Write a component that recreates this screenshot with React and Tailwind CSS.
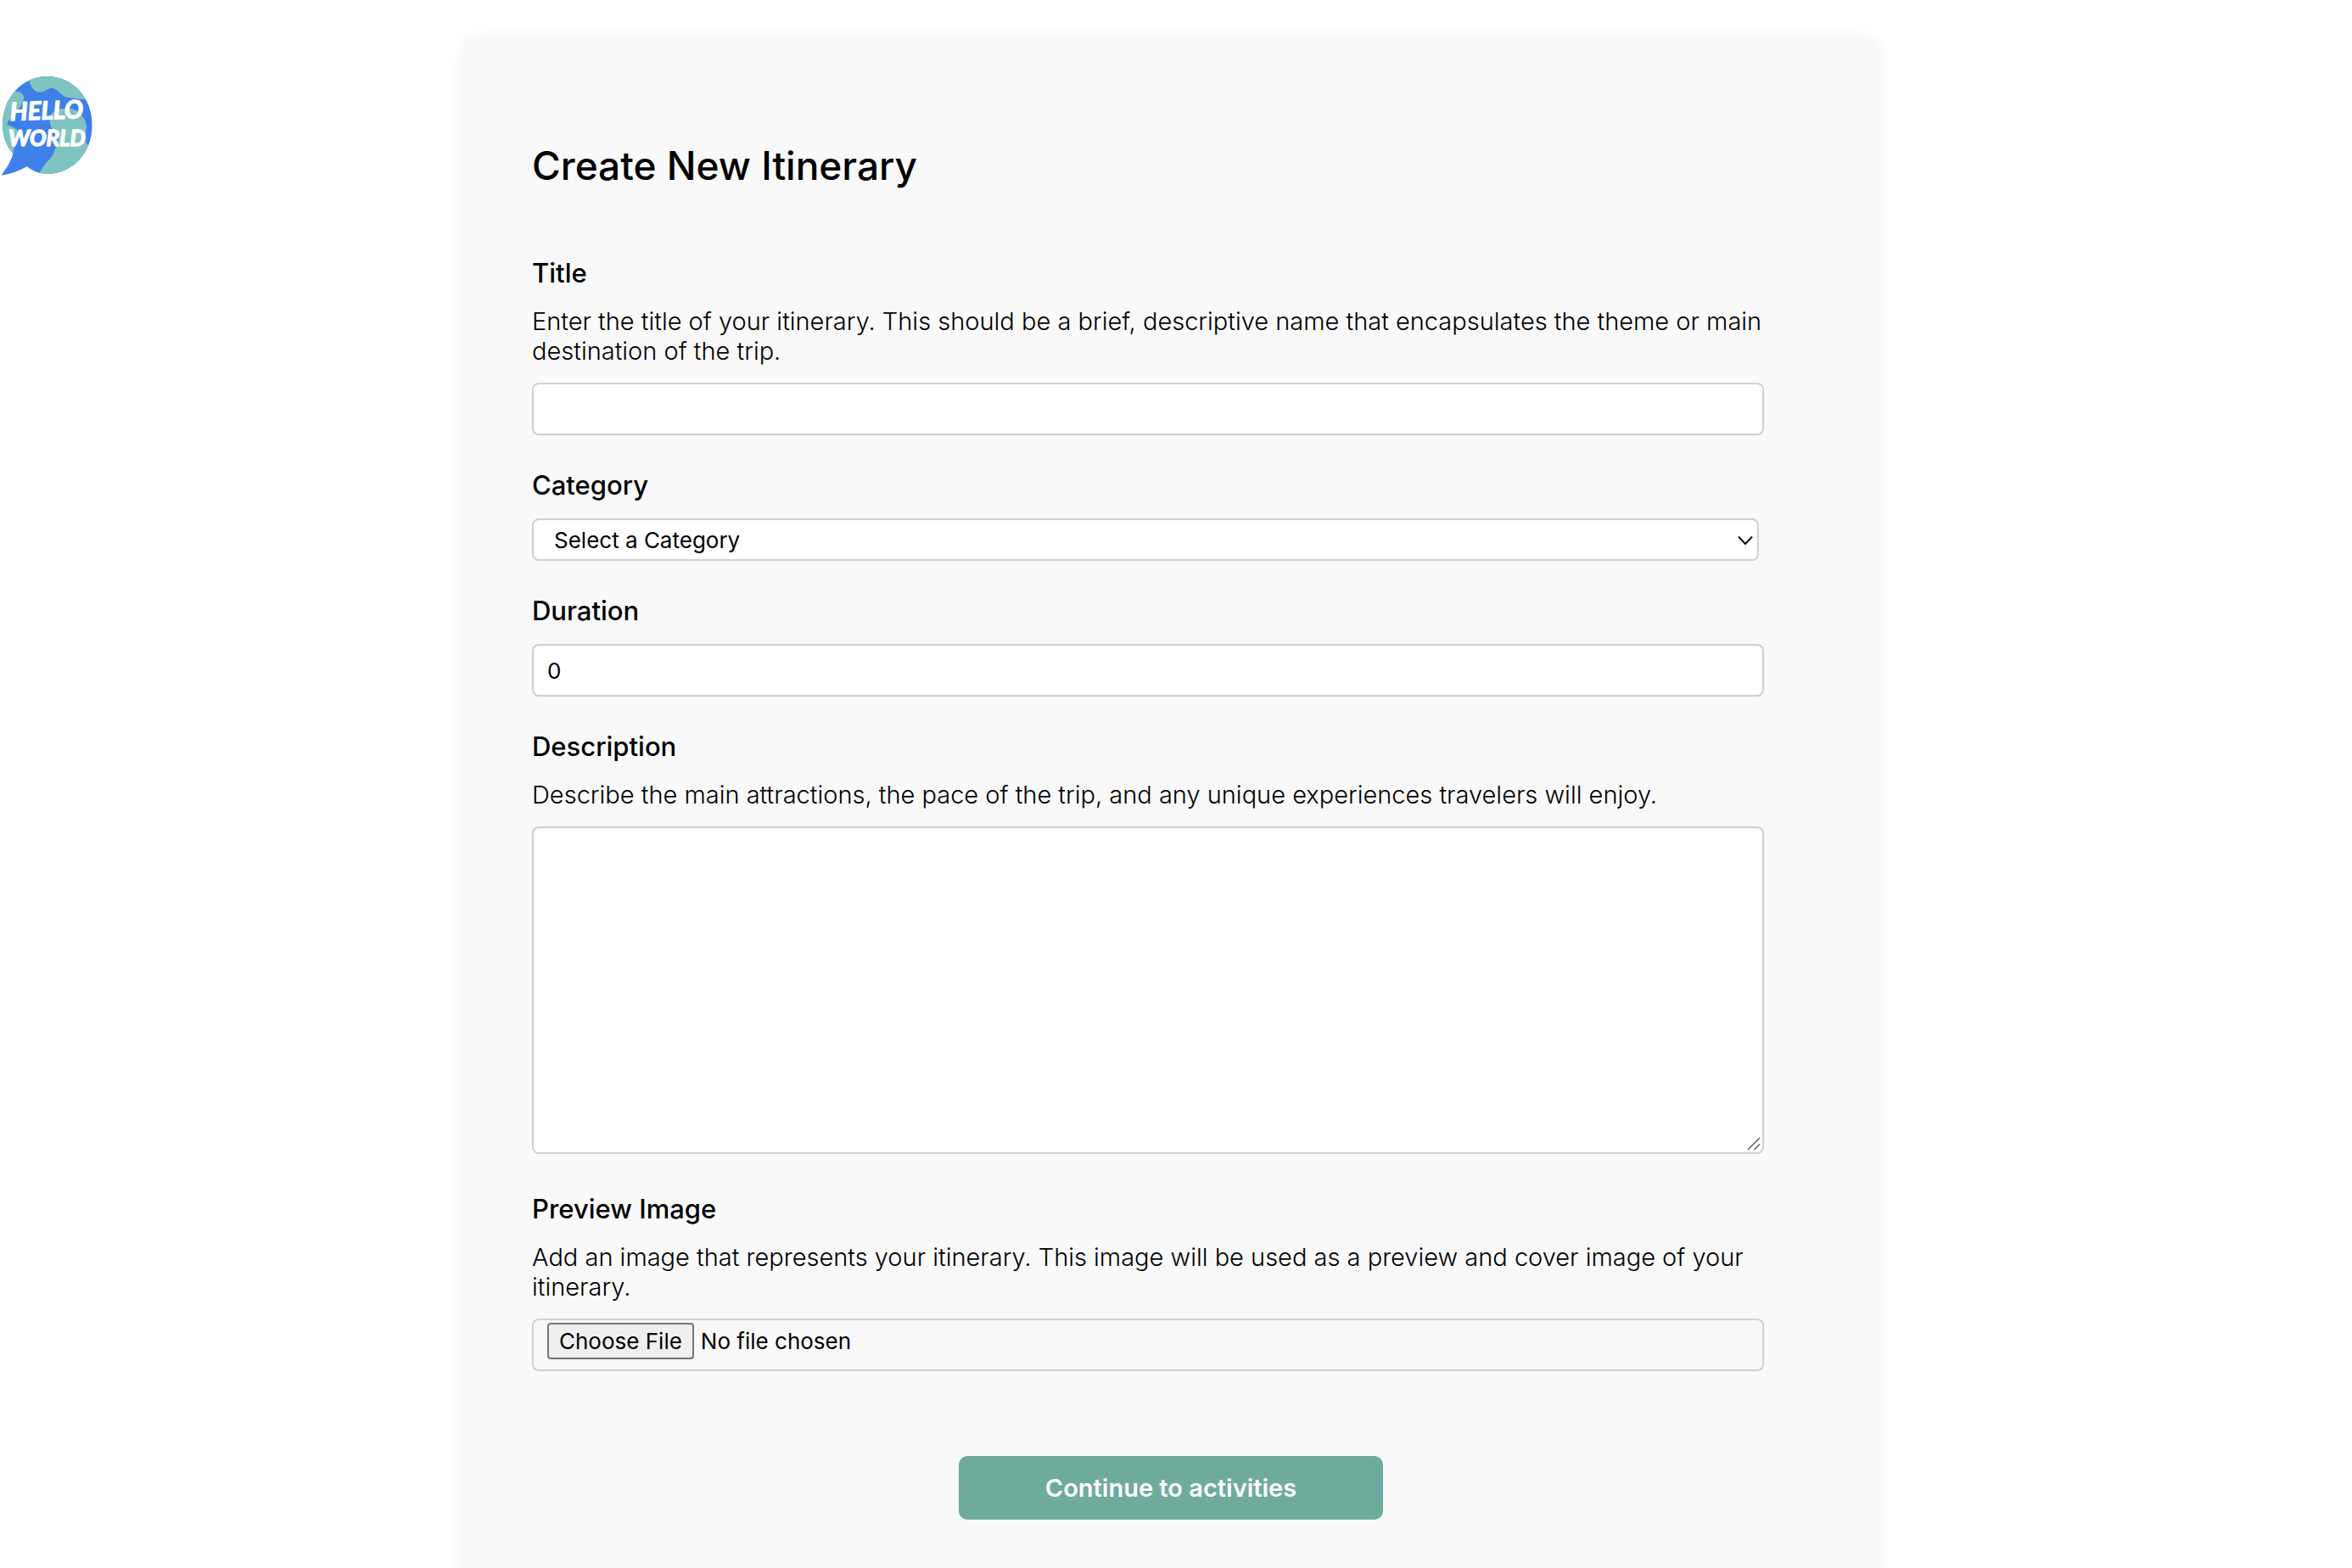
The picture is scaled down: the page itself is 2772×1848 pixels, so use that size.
import React from "react";

const LABEL = "block text-[31px] leading-[38px] font-medium";
const HINT = "mt-5 text-[29px] leading-[35px] font-light";
const BOX = "block rounded-lg border-2 border-[#d0d0d0] text-[26px] outline-none";
const FIELD = "mt-5 w-[calc(100%-54px)]";

function Logo() {
  return (
    <svg viewBox="0 0 360 405" className="h-[135px] w-[120px]" role="img" aria-label="Hello World">
      <defs>
        <clipPath id="globe">
          <path d="M167 30C258 30 326 106 326 202C326 300 258 375 167 375C142 375 118 366 95 349C66 366 36 376 4 380C22 356 38 334 46 303C22 276 9 240 9 202C9 106 78 30 167 30Z" />
        </clipPath>
      </defs>
      <g clipPath="url(#globe)">
        <rect width="360" height="405" fill="#3d80ea" />
        <path d="M104 51C112 66 118 84 138 86C157 88 168 70 185 71C201 74 212 92 232 103C254 109 278 108 303 113V20H104Z" fill="#7fc4c0" />
        <path d="M0 83H60C76 86 85 94 84 108C82 130 62 150 48 168C38 180 22 190 27 201C40 208 56 212 62 222C66 250 50 276 46 303H0Z" fill="#7fc4c0" />
        <path d="M175 172C190 144 225 138 262 147C292 160 306 186 305 214C300 238 296 262 313 275L340 290V390H134C142 352 170 332 187 308C192 290 204 276 206 256C202 240 184 222 178 200Z" fill="#7fc4c0" />
      </g>
      <g
        fill="#fff"
        stroke="#fff"
        strokeWidth="4"
        strokeLinejoin="round"
        fontFamily="Lato, 'Liberation Sans', sans-serif"
        fontWeight="700"
        fontStyle="italic"
      >
        <text x="36" y="186" fontSize="88" transform="rotate(-2 36 186)">HELLO</text>
        <text x="30" y="277" fontSize="78">WORLD</text>
      </g>
    </svg>
  );
}

export default function App() {
  return (
    <div className="grid h-screen grid-cols-[1fr_calc(60%+10px)_1fr] overflow-hidden bg-white pr-3 font-['Inter','Liberation_Sans',sans-serif] text-black">
      <header className="pt-20">
        <a href="#home" className="inline-block">
          <Logo />
        </a>
      </header>

      <main className="mt-[45px] min-h-screen rounded-t-[20px] bg-[#f9f9f9] px-20 pt-[120px] shadow-[0_0_20px_rgba(0,0,0,0.07)]">
        <h1 className="text-[46px] leading-[60px] font-medium">Create New Itinerary</h1>

        <form className="mt-[78px]" onSubmit={(e) => e.preventDefault()}>
          <div>
            <label htmlFor="title" className={LABEL}>Title</label>
            <p className={HINT}>
              Enter the title of your itinerary. This should be a brief, descriptive name that encapsulates the theme or main destination of the trip.
            </p>
            <input id="title" type="text" className={`${BOX} ${FIELD} h-[62px] bg-white px-4`} />
          </div>

          <div className="mt-10">
            <label htmlFor="category" className={LABEL}>Category</label>
            <div className="relative mt-5 w-[calc(100%-60px)]">
              <select id="category" className={`${BOX} h-[50px] w-full appearance-none bg-white pl-6`}>
                <option>Select a Category</option>
              </select>
              <svg viewBox="0 0 20 12" className="pointer-events-none absolute top-5 right-1.5 h-3 w-5" fill="none" stroke="#111" strokeWidth="2">
                <path d="M2 1.5L10 10L18 1.5" />
              </svg>
            </div>
          </div>

          <div className="mt-10">
            <label htmlFor="duration" className={LABEL}>Duration</label>
            <input id="duration" type="text" inputMode="numeric" defaultValue="0" className={`${BOX} ${FIELD} h-[62px] bg-white px-4`} />
          </div>

          <div className="mt-10">
            <label htmlFor="description" className={LABEL}>Description</label>
            <p className={HINT}>
              Describe the main attractions, the pace of the trip, and any unique experiences travelers will enjoy.
            </p>
            <div className={`relative ${FIELD}`}>
              <textarea id="description" className={`${BOX} h-[386px] w-full resize-none bg-white p-4`} />
              <svg viewBox="0 0 16 16" className="pointer-events-none absolute right-1 bottom-1 h-4 w-4" stroke="#555" strokeWidth="1.4">
                <path d="M1 15L15 1M8.500 15L15 8.500" />
              </svg>
            </div>
          </div>

          <div className="mt-[46px]">
            <label htmlFor="preview" className={LABEL}>Preview Image</label>
            <p className={HINT}>
              Add an image that represents your itinerary. This image will be used as a preview and cover image of your itinerary.
            </p>
            <input
              id="preview"
              type="file"
              className={`${BOX} ${FIELD} h-[62px] px-4 pt-[3px] file:mr-2 file:h-[43px] file:rounded-[4px] file:border-2 file:border-solid file:border-[#767676] file:bg-[#efefef] file:px-3 file:text-black`}
            />
          </div>

          <button type="submit" className="mx-auto mt-[100px] block h-[75px] w-[500px] rounded-[10px] bg-[#6fab9c] text-[29px] font-semibold text-white">
            Continue to activities
          </button>
        </form>
      </main>
    </div>
  );
}
